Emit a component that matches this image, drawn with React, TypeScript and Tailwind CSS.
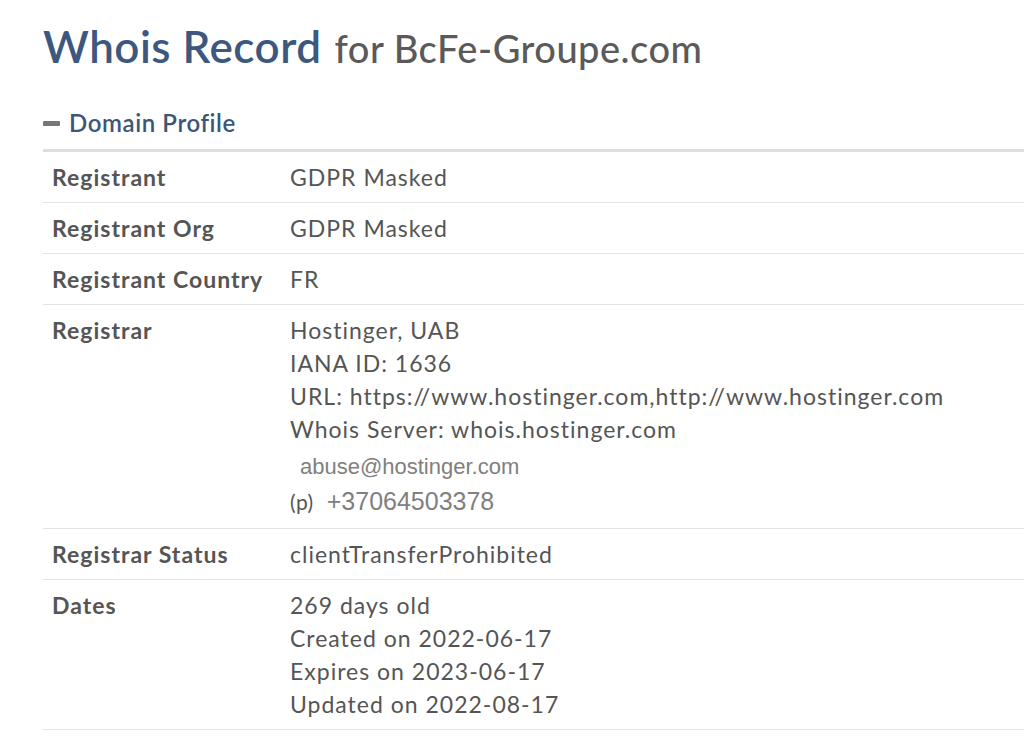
import React from 'react';

const rows: { label: string; lines: string[] }[] = [
  { label: 'Registrant', lines: ['GDPR Masked'] },
  { label: 'Registrant Org', lines: ['GDPR Masked'] },
  { label: 'Registrant Country', lines: ['FR'] },
];

export default function App() {
  return (
    <div className="min-h-screen bg-white font-['Lato',sans-serif] text-[#555] pl-[43px]">
      {/* Title */}
      <h1 className="pt-[20px] leading-[52px] whitespace-nowrap">
        <span className="text-[44px] font-semibold text-[#3d5880] tracking-[0.5px]">Whois Record</span>
        <span className="text-[38px] font-medium text-[#5a5a5a] ml-[13px] tracking-[0.5px]">for BcFe-Groupe.com</span>
      </h1>

      {/* Section header */}
      <div className="mt-[25px] flex items-center gap-[9px]">
        <div className="w-[17px] h-[5px] rounded-[1px] bg-[#777]" />
        <span className="text-[24px] font-semibold text-[#3d5578] tracking-[0.6px] leading-[30px]">Domain Profile</span>
      </div>

      {/* Table */}
      <div className="mt-[11px] border-t-[3px] border-[#dedede] text-[23px] tracking-[1px]">
        {rows.map((r) => (
          <Row key={r.label} label={r.label}>
            {r.lines.map((l) => (
              <div key={l}>{l}</div>
            ))}
          </Row>
        ))}

        <Row label="Registrar">
          <div>Hostinger, UAB</div>
          <div>IANA ID: 1636</div>
          <div>URL: https://www.hostinger.com,http://www.hostinger.com</div>
          <div>Whois Server: whois.hostinger.com</div>
          <div className="mt-[4px] pl-[10px] font-['Liberation_Sans',sans-serif] text-[22px] tracking-[0px] text-[#808080]">
            abuse@hostinger.com
          </div>
          <div className="leading-[36px] flex items-baseline">
            <span className="text-[21px] tracking-[0.5px]">(p)</span>
            <span className="ml-[13px] font-['Liberation_Sans',sans-serif] text-[25px] tracking-[0px] text-[#808080]">+37064503378</span>
          </div>
        </Row>

        <Row label="Registrar Status">
          <div>clientTransferProhibited</div>
        </Row>

        <Row label="Dates">
          <div>269 days old</div>
          <div>Created on 2022-06-17</div>
          <div>Expires on 2023-06-17</div>
          <div>Updated on 2022-08-17</div>
        </Row>
      </div>
    </div>
  );
}

function Row({ label, children }: { label: string; children: React.ReactNode }) {
  return (
    <div className="grid grid-cols-[247px_1fr] border-b border-[#e3e3e3] pt-[9px] pb-[8px] leading-[33px]">
      <div className="pl-[9px] font-bold text-[#555] whitespace-nowrap">{label}</div>
      <div className="text-[#555] whitespace-nowrap">{children}</div>
    </div>
  );
}
